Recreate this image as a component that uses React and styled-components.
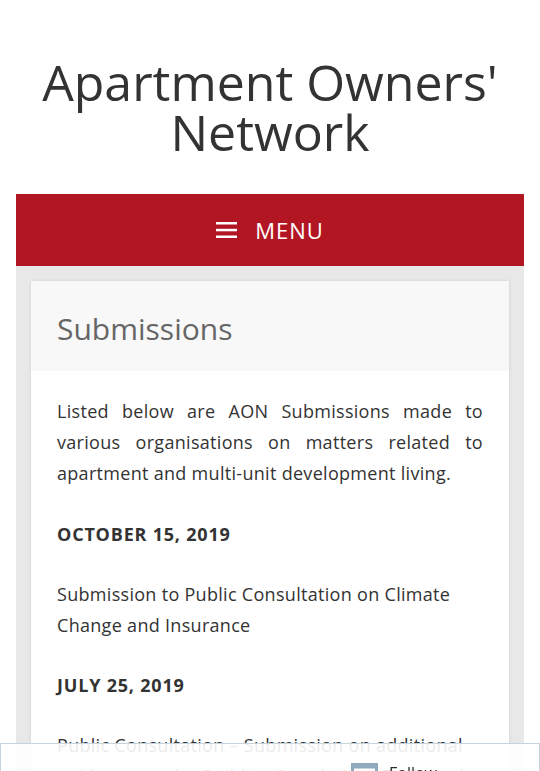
import React from 'react';
import styled, { createGlobalStyle } from 'styled-components';

const colors = {
  text: '#333333',
  heading: '#666666',
  red: '#b31623',
  gray: '#e8e8e8',
  headerBg: '#f8f8f8',
  followBorder: '#c6d4de',
  followIcon: '#8fa9bd',
};

const GlobalStyle = createGlobalStyle`
  html, body {
    margin: 0;
    padding: 0;
    background: #fff;
    overflow: hidden;
  }
  body {
    font-family: "Open Sans", "Noto Sans", sans-serif;
    color: ${colors.text};
  }
`;

const Page = styled.div`
  padding: 0 16px;
  height: 771px;
  overflow: hidden;
`;

const SiteHeader = styled.header`
  padding: 57px 0 37px;
  text-align: center;
`;

const SiteTitle = styled.h1`
  margin: 0;
  font-size: 50px;
  line-height: 50px;
  font-weight: 400;
  color: ${colors.text};
`;

const NavBar = styled.nav`
  background: ${colors.red};
  height: 72px;
  display: flex;
  align-items: center;
  justify-content: center;
  gap: 18px;
  color: #fff;
`;

const MenuLabel = styled.span`
  font-size: 22px;
  letter-spacing: 1px;
`;

const Content = styled.main`
  background: ${colors.gray};
  padding: 15px 15px 0;
`;

const Card = styled.article`
  background: #fff;
  box-shadow: 0 0 3px rgba(0, 0, 0, 0.12);
`;

const CardHeader = styled.header`
  background: ${colors.headerBg};
  height: 90px;
  padding: 0 26px;
  display: flex;
  align-items: center;
`;

const CardTitle = styled.h2`
  margin: 0;
  font-size: 30px;
  font-weight: 400;
  color: ${colors.heading};
  padding-top: 4px;
`;

const CardBody = styled.div`
  padding: 25px 26px 40px;
`;

const Paragraph = styled.p`
  margin: 0 0 29.5px;
  font-size: 18px;
  line-height: 31px;
  letter-spacing: 0.3px;
  text-align: ${({ justify }) => (justify ? 'justify' : 'left')};
`;

const DateHeading = styled.h4`
  margin: 0 0 29px;
  font-size: 18px;
  line-height: 31px;
  font-weight: 700;
  letter-spacing: 0.8px;
  text-transform: uppercase;
`;

const FollowBar = styled.div`
  position: fixed;
  left: 0;
  right: 0;
  top: 743px;
  height: 60px;
  background: rgba(255, 255, 255, 0.9);
  border: 1px solid ${colors.followBorder};
  border-bottom: none;
  box-sizing: border-box;
  display: flex;
  justify-content: flex-end;
  padding: 19px 0 0 0;
`;

const FollowButton = styled.div`
  display: flex;
  align-items: flex-start;
  gap: 11px;
  width: 188px;
  font-size: 16px;
  color: #2b2b2b;
  line-height: 20px;
`;

const MenuIcon = () => (
  <svg width="21" height="18" viewBox="0 0 21 18" aria-hidden="true">
    <rect x="0" y="1" width="21" height="2.5" fill="#fff" />
    <rect x="0" y="7.8" width="21" height="2.5" fill="#fff" />
    <rect x="0" y="14.5" width="21" height="2.5" fill="#fff" />
  </svg>
);

const FollowIcon = () => (
  <svg width="27" height="20" viewBox="0 0 27 20" aria-hidden="true">
    <rect x="1.5" y="1.5" width="24" height="17" fill="none" stroke={colors.followIcon} strokeWidth="3" />
    <rect x="1.5" y="1.5" width="24" height="4" fill={colors.followIcon} />
  </svg>
);

const App = () => (
  <Page>
    <GlobalStyle />
    <SiteHeader>
      <SiteTitle>Apartment Owners' Network</SiteTitle>
    </SiteHeader>
    <NavBar>
      <MenuIcon />
      <MenuLabel>MENU</MenuLabel>
    </NavBar>
    <Content>
      <Card>
        <CardHeader>
          <CardTitle>Submissions</CardTitle>
        </CardHeader>
        <CardBody>
          <Paragraph justify>
            Listed below are AON Submissions made to various organisations on
            matters related to apartment and multi-unit development living.
          </Paragraph>
          <DateHeading>October 15, 2019</DateHeading>
          <Paragraph>
            Submission to Public Consultation on Climate Change and Insurance
          </Paragraph>
          <DateHeading>July 25, 2019</DateHeading>
          <Paragraph>
            Public Consultation – Submission on additional guidance on the
            Building Regulations Technical Guidance Document
          </Paragraph>
        </CardBody>
      </Card>
    </Content>
    <FollowBar>
      <FollowButton>
        <FollowIcon />
        <span>Follow</span>
      </FollowButton>
    </FollowBar>
  </Page>
);

export default App;
